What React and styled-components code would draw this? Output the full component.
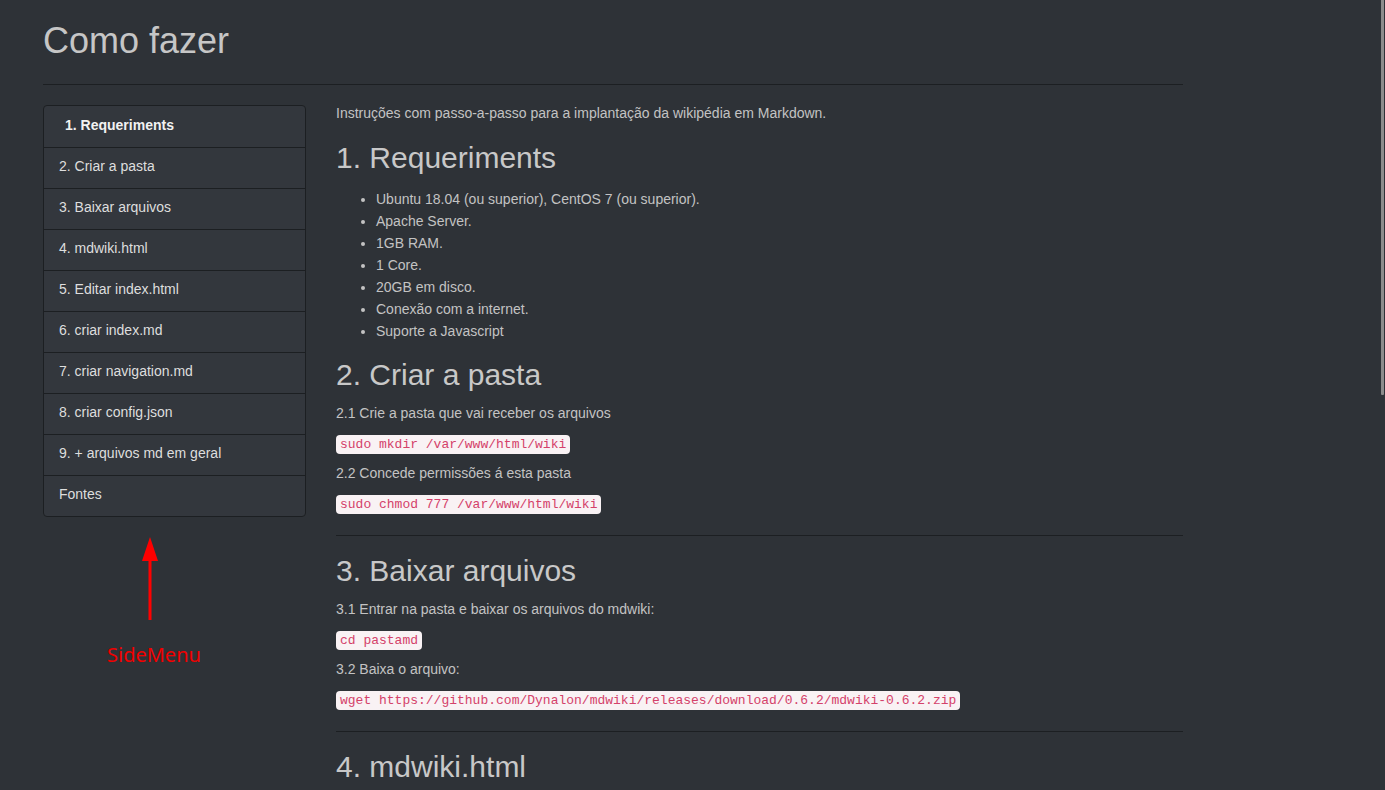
import React from "react";
import styled, { createGlobalStyle } from "styled-components";

const menu = [
  "1. Requeriments",
  "2. Criar a pasta",
  "3. Baixar arquivos",
  "4. mdwiki.html",
  "5. Editar index.html",
  "6. criar index.md",
  "7. criar navigation.md",
  "8. criar config.json",
  "9. + arquivos md em geral",
  "Fontes",
];

const requisitos = [
  "Ubuntu 18.04 (ou superior), CentOS 7 (ou superior).",
  "Apache Server.",
  "1GB RAM.",
  "1 Core.",
  "20GB em disco.",
  "Conexão com a internet.",
  "Suporte a Javascript",
];

const GlobalStyle = createGlobalStyle`
  html, body {
    margin: 0;
    padding: 0;
    overflow: hidden;
    background: #2e3237;
  }
  body {
    font-family: "Liberation Sans", Arial, sans-serif;
    font-size: 14px;
    line-height: 20px;
    color: #c3c3c3;
  }
`;

const App = () => {
  return (
    <React.Fragment>
      <GlobalStyle />
      <Page>
        <Title>Como fazer</Title>
        <TopRule />
        <Columns>
          <SideColumn>
            <Nav>
              {menu.map((m, idx) => (
                <NavItem key={m} active={idx === 0}>
                  {m}
                </NavItem>
              ))}
            </Nav>
            {/* anotação em vermelho */}
            <Arrow width="18" height="84" viewBox="0 0 18 84">
              <polygon points="9,0 1,24 17,24" fill="#ff0000" />
              <rect x="7.5" y="22" width="3" height="61" fill="#ff0000" />
            </Arrow>
            <NoteLabel>SideMenu</NoteLabel>
          </SideColumn>

          <Content>
            <Intro>
              Instruções com passo-a-passo para a implantação da wikipédia em
              Markdown.
            </Intro>

            <SectionTitle>1. Requeriments</SectionTitle>
            <List>
              {requisitos.map((r) => (
                <li key={r}>{r}</li>
              ))}
            </List>

            <SectionTitle>2. Criar a pasta</SectionTitle>
            <Para>2.1 Crie a pasta que vai receber os arquivos</Para>
            <Para>
              <Code>sudo mkdir /var/www/html/wiki</Code>
            </Para>
            <Para>2.2 Concede permissões á esta pasta</Para>
            <Para>
              <Code>sudo chmod 777 /var/www/html/wiki</Code>
            </Para>
            <SectionRule />

            <SectionTitle>3. Baixar arquivos</SectionTitle>
            <Para>3.1 Entrar na pasta e baixar os arquivos do mdwiki:</Para>
            <Para>
              <Code>cd pastamd</Code>
            </Para>
            <Para>3.2 Baixa o arquivo:</Para>
            <Para>
              <Code>
                wget
                https://github.com/Dynalon/mdwiki/releases/download/0.6.2/mdwiki-0.6.2.zip
              </Code>
            </Para>
            <SectionRule />

            <SectionTitle>4. mdwiki.html</SectionTitle>
          </Content>
        </Columns>
      </Page>
      <ScrollThumb />
    </React.Fragment>
  );
};

const Page = styled.div`
  width: 1140px;
  padding: 21px 0 0 43px;
`;

const Title = styled.h1`
  margin: 0;
  font-size: 36px;
  line-height: 1.1;
  font-weight: 400;
  color: #c6c6c6;
`;

const TopRule = styled.hr`
  margin: 23px 0 20px;
  height: 0;
  border: 0;
  border-top: 1px solid #1c1f22;
`;

const Columns = styled.div`
  display: flex;
  gap: 30px;
  align-items: flex-start;
`;

const SideColumn = styled.div`
  width: 263px;
  flex-shrink: 0;
  display: flex;
  flex-direction: column;
`;

const Nav = styled.div`
  border: 1px solid #1c1f22;
  border-radius: 4px;
  background: #33373d;
  overflow: hidden;
`;

const NavItem = styled.div`
  padding: ${(props) => (props.active ? "9px 15px 12px 21px" : "8px 15px 12px")};
  line-height: 20px;
  font-size: 14px;
  font-weight: ${(props) => (props.active ? "bold" : "normal")};
  color: ${(props) => (props.active ? "#f2f2f2" : "#dedede")};
  border-top: ${(props) => (props.active ? "none" : "1px solid #1c1f22")};
  cursor: pointer;
`;

const Arrow = styled.svg`
  display: block;
  margin: 20px 0 0 98px;
`;

const NoteLabel = styled.div`
  margin: 20px 0 0 64px;
  font-family: "Noto Sans", "DejaVu Sans", sans-serif;
  font-size: 20px;
  line-height: normal;
  color: #f20000;
`;

const Content = styled.div`
  flex: 1;
  min-width: 0;
`;

const Para = styled.p`
  margin: 0 0 10px;
`;

const Intro = styled(Para)`
  margin-top: -2px;
`;

const SectionTitle = styled.h2`
  margin: 18px 0 12px;
  font-size: 30px;
  line-height: 1.1;
  font-weight: 400;
  color: #c8c8c8;
`;

const List = styled.ul`
  margin: 0 0 -2px;
  padding: 2px 0 0 40px;
  line-height: 22px;
`;

const Code = styled.code`
  font-family: "Liberation Mono", "Courier New", monospace;
  font-size: 13px;
  line-height: 1;
  padding: 2px 4px;
  background: #f9f2f4;
  color: #d4416a;
  border-radius: 4px;
  white-space: nowrap;
`;

const SectionRule = styled.hr`
  margin: 22px 0 13px;
  height: 0;
  border: 0;
  border-top: 1px solid #1c1f22;
`;

const ScrollThumb = styled.div`
  position: fixed;
  top: 0;
  right: 1px;
  width: 3px;
  height: 395px;
  background: #8c8c8c;
  border-radius: 0 0 1px 1px;
`;

export default App;
